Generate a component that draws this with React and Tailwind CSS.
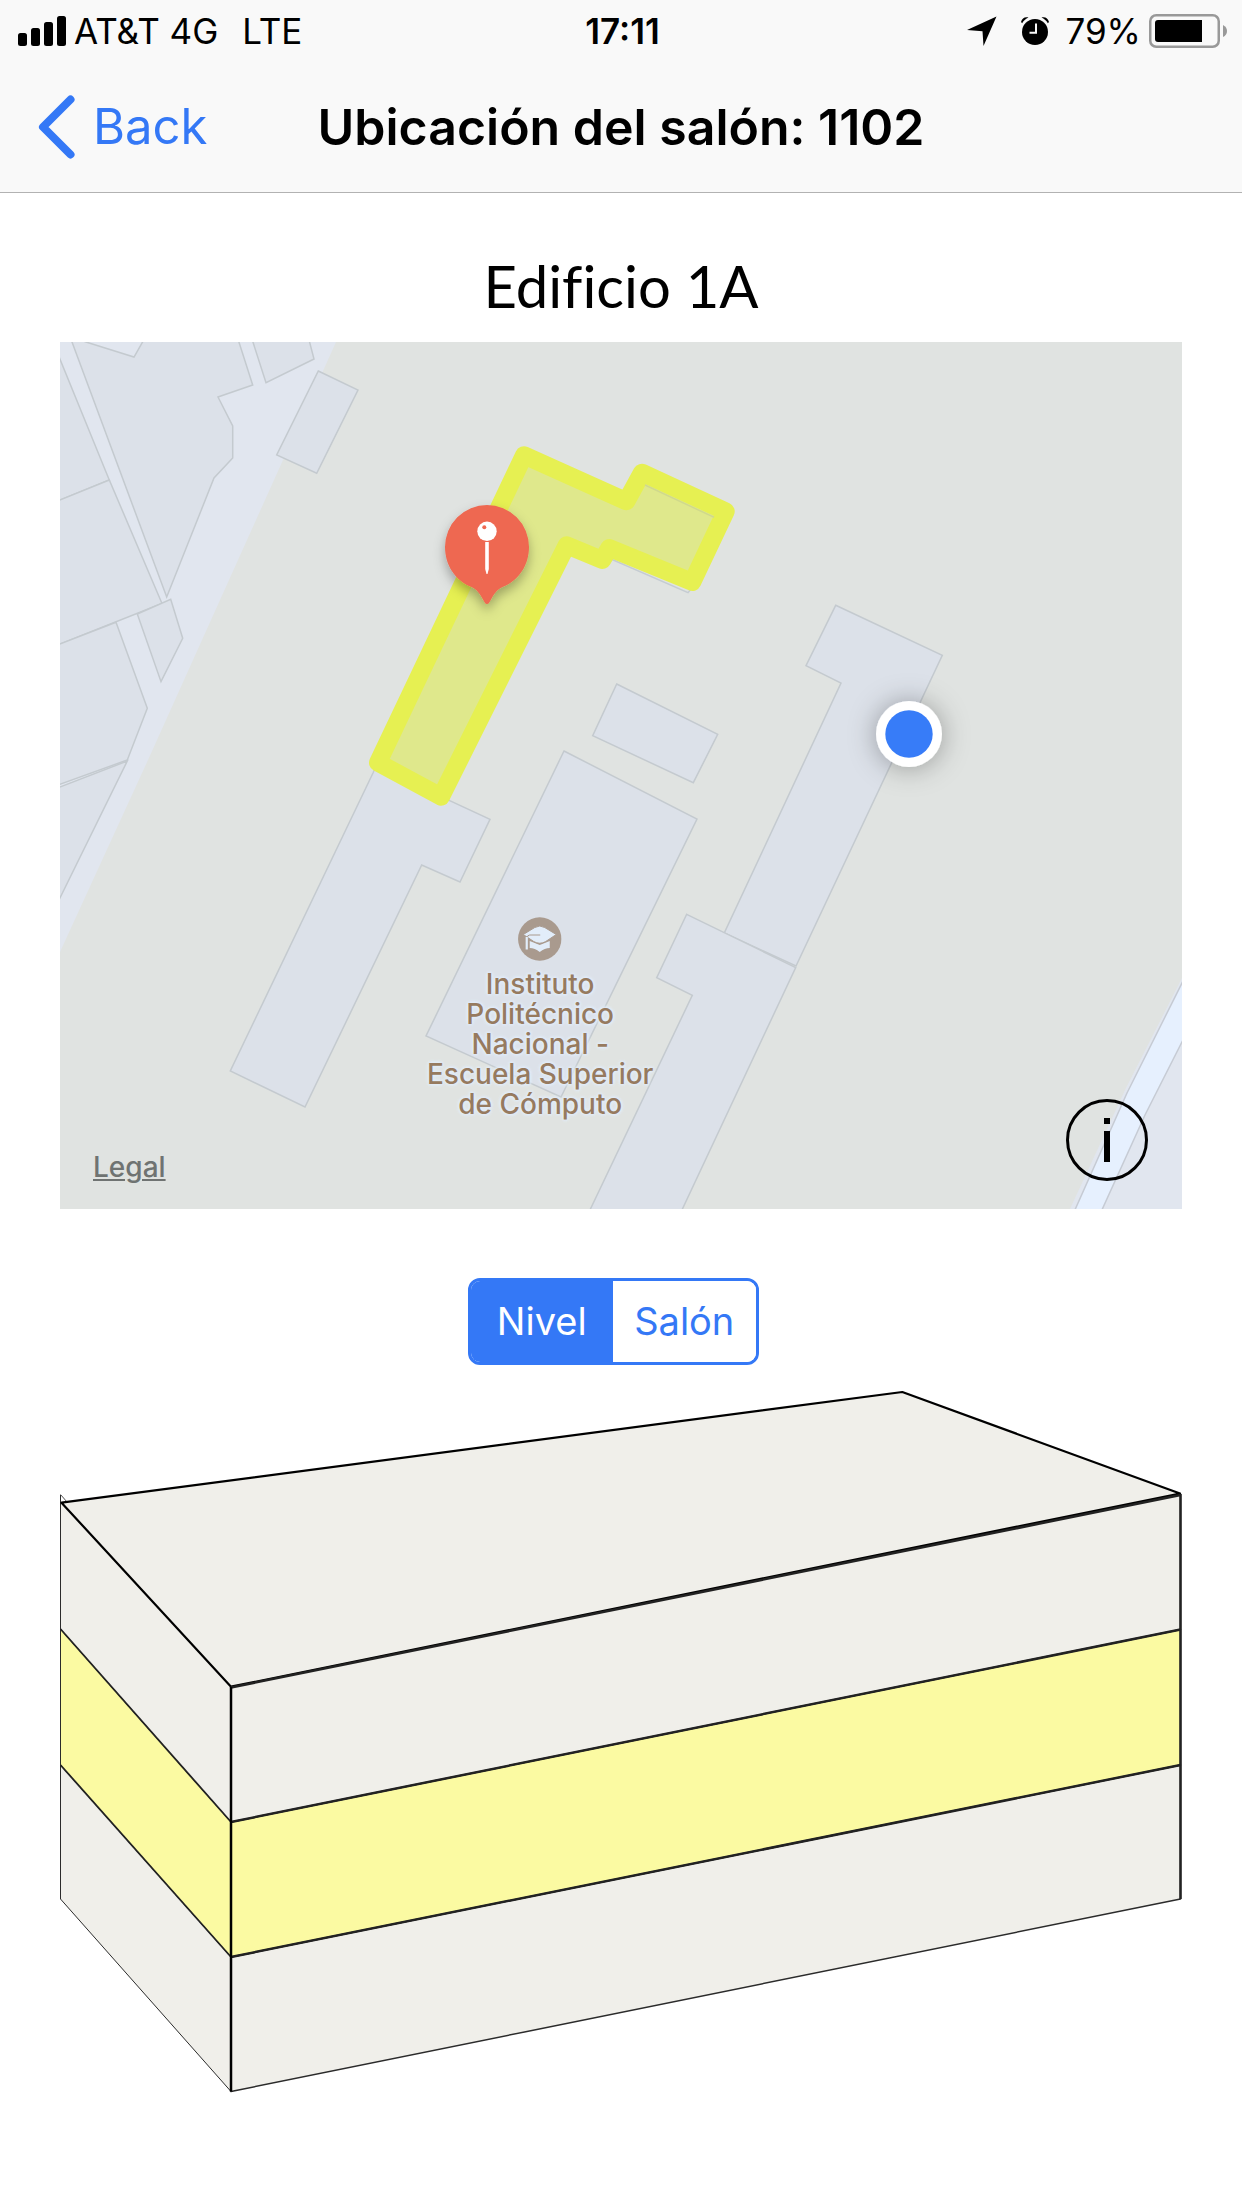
import { useState } from "react";

function SignalBars() {
  return (
    <svg className="h-[30px] w-12" viewBox="0 0 48 30" aria-hidden="true">
      <rect x="0" y="17" width="9" height="13" rx="2.5" />
      <rect x="13" y="12" width="9" height="18" rx="2.5" />
      <rect x="26" y="6" width="9" height="24" rx="2.5" />
      <rect x="39" y="0" width="9" height="30" rx="2.5" />
    </svg>
  );
}

function LocationArrow() {
  return (
    <svg className="h-[30px] w-[30px]" viewBox="0 0 30 30" aria-hidden="true">
      <path d="M29.500 .5 L16.500 30 L15.500 15.200 L0 14 Z" />
    </svg>
  );
}

function AlarmClock() {
  return (
    <svg className="h-7 w-7" viewBox="0 0 28 28" aria-hidden="true">
      <circle cx="14" cy="15" r="13" />
      <path d="M0 5 C1 1 4 -.5 7.500 .5 C5 1.500 2.200 4 1.200 6.300 Z" />
      <path d="M28 5 C27 1 24 -.5 20.500 .5 C23 1.500 25.800 4 26.800 6.300 Z" />
      <path d="M8.500 15.800 H15 V6.500" fill="none" stroke="#f9f9f9" strokeWidth="2" />
    </svg>
  );
}

function Battery() {
  return (
    <svg className="h-[34px] w-[78px]" viewBox="0 0 78 34" aria-hidden="true">
      <rect x="1.250" y="1.250" width="68.500" height="31.500" rx="6" fill="none" stroke="#999" strokeWidth="2.500" />
      <path d="M9 6 H53 V28 H9 Q6 28 6 25 V9 Q6 6 9 6 Z" />
      <path d="M74 11 Q78 13 78 17 Q78 21 74 23 Z" fill="#999" />
    </svg>
  );
}

function StatusBar() {
  return (
    <div className="grid h-[62px] grid-cols-[1fr_auto_1fr] items-center pr-[15px] pl-[18px] text-[35px] leading-[60px]">
      <div className="flex items-center gap-2">
        <SignalBars />
        <span>AT&amp;T 4G</span>
        <span className="ml-4">LTE</span>
      </div>
      <span className="font-semibold">17:11</span>
      <div className="flex items-center justify-end">
        <LocationArrow />
        <span className="ml-6 flex"><AlarmClock /></span>
        <span className="ml-4">79%</span>
        <span className="ml-2 flex"><Battery /></span>
      </div>
    </div>
  );
}

function NavBar() {
  return (
    <nav className="grid h-[130px] grid-cols-[1fr_auto_1fr] items-center px-[35px]">
      <button type="button" className="flex items-center gap-[18px] justify-self-start text-[49px] text-[#3478f6]">
        <svg className="h-16 w-10" viewBox="0 0 40 64" fill="none" stroke="currentColor" strokeWidth="8" strokeLinecap="round" strokeLinejoin="round" aria-hidden="true">
          <path d="M35.500 4.500 L8 32 L35.500 59.500" />
        </svg>
        Back
      </button>
      <h1 className="text-[50px] font-semibold">Ubicación del salón: 1102</h1>
    </nav>
  );
}

const buildings = [
  "72,342 166.700,597 214,478 232.700,458 232.700,426 218,397 252.700,385 237,336 146,336 134,357 86,342 70,336",
  "251,336 266,382.700 314,359 308,336",
  "318.300,371 358,390 316.700,473.300 276.700,455",
  "55,347 109.300,480 55,502",
  "55,502 109.300,480 162,603.500 55,646",
  "137.300,614 170.700,599.300 182.700,638.300 161,681.700",
  "55,646 116,622.300 147.300,708.300 127.300,760 55,786",
  "55,789 127.300,761 55,908",
  "373,773 382,752 449.700,800.700 490,819.300 460,882 421.700,865 305,1107 230.300,1071",
  "616.700,684 717.700,734.300 693.300,782.700 592.700,735.700",
  "564,751 697,819 561,1097 426,1036",
  "835.700,605.300 942.300,655.300 796,966 724.300,933 841,683 806,665.700",
  "686.700,914.300 795.700,967.500 681,1212 589,1212 692.300,995.300 656.700,977.700",
];

function CampusMap() {
  return (
    <div className="relative overflow-hidden">
      <svg className="block w-full" viewBox="60 342 1122 867" role="img" aria-label="Mapa del campus">
        <defs>
          <filter id="pinShadow" x="-40%" y="-40%" width="180%" height="180%">
            <feDropShadow dx="0" dy="6" stdDeviation="6" floodOpacity=".3" />
          </filter>
          <filter id="dotShadow" x="-100%" y="-100%" width="300%" height="300%">
            <feDropShadow dx="0" dy="1" stdDeviation="14" floodOpacity=".33" />
          </filter>
        </defs>
        <rect x="60" y="342" width="1122" height="867" fill="#e1e6ef" />
        <path d="M336 342 L283 460 L148 760 L60 952 V1209 H1182 V342 Z" fill="#e0e3e1" />
        <path d="M1182 978 L1126 1088 L1070 1209 H1182 Z" fill="#e1e6ef" />
        <path d="M1184 979 L1127 1093 L1074 1212 H1101 L1145 1115 L1184 1038 Z" fill="#e6f0fe" stroke="#c6cbd4" strokeWidth="1.500" />
        <g fill="#dce1e9" stroke="#c4cacf" strokeWidth="1.500">
          {buildings.map((points) => (
            <polygon key={points} points={points} />
          ))}
        </g>
        <path d="M611 559 L688 592.700 L692 588" fill="none" stroke="#c5ccd2" strokeWidth="1.500" />
        <polygon
          points="524,455.300 626.300,501.300 642,472.700 725.700,511.300 692.300,582 609.300,548 602.300,560 566.700,545.300 441,796.700 378,762.700"
          fill="#dfe88c"
          stroke="#e6f052"
          strokeWidth="18"
          strokeLinejoin="round"
        />
        <path d="M645 485 L714 517.300" stroke="#d0d98c" strokeWidth="1.500" />
        <g filter="url(#pinShadow)">
          <path
            d="M487 604 C485 604 484.500 602 483 599.500 C480 594 477 589.500 471.500 587 C455 580.500 445 565 445 547 A42 42 0 0 1 529 547 C529 565 519 580.500 502.500 587 C497 589.500 494 594 491 599.500 C489.500 602 489 604 487 604 Z"
            fill="#ee6851"
          />
        </g>
        <circle cx="487" cy="531.300" r="9.700" fill="#fff" />
        <circle cx="484.300" cy="527.200" r="2" fill="#ee6851" />
        <path d="M485.200 542 H488.800 V569 L487.500 574 H486.500 L485.200 569 Z" fill="#fff" />
        <circle cx="909" cy="734" r="33" fill="#fff" filter="url(#dotShadow)" />
        <circle cx="909" cy="734" r="23.700" fill="#377cf8" />
      </svg>

      <div className="absolute top-[66.300%] left-[42.800%] flex -translate-x-1/2 flex-col items-center">
        <svg className="size-11" viewBox="0 0 44 44" aria-hidden="true">
          <circle cx="22" cy="22" r="21.700" fill="#a99a8e" />
          <path d="M12 24 L22 28 L32 24 V31 Q27 31 22 35 Q17 31 12 31 Z" fill="#e2edfa" />
          <path d="M5.500 17.500 L17 10.500 Q22 7.500 27 10.500 L38.500 17.500 L28 24.500 Q22 28 16 24.500 Z" fill="#e2edfa" stroke="#a99a8e" strokeWidth="1" />
          <path d="M22.500 18 H12 Q9.500 18 9.500 21 V32" fill="none" stroke="#a99a8e" strokeWidth="1" />
          <path d="M9 20 V32.500" stroke="#e2edfa" strokeWidth="2.200" />
        </svg>
        <p className="mt-2 text-center text-[28px] leading-[30px] font-medium whitespace-nowrap text-[#967a5f] [text-shadow:0_0_3px_#e2edfa,0_0_3px_#e2edfa,0_0_4px_#e2edfa,0_0_4px_#e2edfa]">
          Instituto
          <br />
          Politécnico
          <br />
          Nacional -
          <br />
          Escuela Superior
          <br />
          de Cómputo
        </p>
      </div>

      <a href="#legal" className="absolute bottom-6 left-[33px] text-[28px] leading-9 font-medium text-[#6f7372] underline decoration-2 underline-offset-2">
        Legal
      </a>
      <button type="button" aria-label="Información" className="absolute right-[34px] bottom-7">
        <svg className="block size-[82px]" viewBox="0 0 82 82" aria-hidden="true">
          <circle cx="41" cy="41" r="39.500" fill="none" stroke="#000" strokeWidth="3" />
          <path d="M38 19 H44 V25 H38 Z M38 32 H44 V63 H38 Z" />
        </svg>
      </button>
    </div>
  );
}

const segments = ["Nivel", "Salón"];

function SegmentedControl() {
  const [active, setActive] = useState("Nivel");
  return (
    <div className="mr-4 flex h-[87px] w-[291px] overflow-hidden rounded-xl border-3 border-[#3478f6] text-[38px]">
      {segments.map((name) => (
        <button
          key={name}
          type="button"
          aria-pressed={active === name}
          onClick={() => setActive(name)}
          className={active === name ? "flex-1 bg-[#3478f6] text-white" : "flex-1 bg-white text-[#3478f6]"}
        >
          {name}
        </button>
      ))}
    </div>
  );
}

function LevelsDrawing() {
  return (
    <svg className="block w-full" viewBox="60 1390 1122 705" strokeLinejoin="round" role="img" aria-label="Niveles del edificio">
      <g fill="#f0efea" stroke="#2b2b2b" strokeWidth="1.500">
        <path d="M60.500 1765 L231 1957 V2091.500 L60.500 1899 Z" strokeWidth="1" />
        <path d="M231 1957 L1180.500 1765 V1899 L231 2091.500 Z" />
        <path d="M60.500 1629 L231 1822 V1957 L60.500 1765 Z" fill="#fbfaa2" strokeWidth="1" />
        <path d="M231 1822 L1180.500 1629.500 V1765 L231 1957 Z" fill="#fbfaa2" />
        <path d="M60.500 1495 L231 1687 V1822 L60.500 1629 Z" strokeWidth="1" />
        <path d="M231 1687 L1180.500 1494.500 V1629.500 L231 1822 Z" />
      </g>
      <path d="M61 1494.500 L68 1502.500 H61 Z" fill="#fff" />
      <path d="M60.500 1494.500 L67 1502" stroke="#555" strokeWidth="1" />
      <path d="M61.500 1502.700 L902.300 1392 L1180 1493.500 L231 1686.700 Z" fill="#f0efea" stroke="#000" strokeWidth="2.200" />
      <g fill="none" stroke="#222" strokeWidth="2.500">
        <path d="M231 1687.500 L1180.500 1495" />
        <path d="M231 1822 L1180.500 1629.500" />
        <path d="M231 1957 L1180.500 1765" />
        <path d="M60.500 1629 L231 1822" strokeWidth="1.800" />
        <path d="M60.500 1765 L231 1957" strokeWidth="1.800" />
        <path d="M231 1687 V2091.500" stroke="#000" />
        <path d="M1180.500 1494 V1899" />
      </g>
    </svg>
  );
}

export default function App() {
  return (
    <div className="min-h-screen bg-white font-['Inter',sans-serif] text-black">
      <header className="border-b border-[#b2b2b2] bg-[#f9f9f9]">
        <StatusBar />
        <NavBar />
      </header>
      <main className="flex flex-col px-15 pt-14">
        <h2 className="mb-5 text-center font-['Lato',sans-serif] text-[58px] leading-[73px] font-normal [font-variant-ligatures:none]">Edificio 1A</h2>
        <CampusMap />
        <div className="mt-[69px] mb-[25px] flex justify-center">
          <SegmentedControl />
        </div>
        <LevelsDrawing />
      </main>
    </div>
  );
}
